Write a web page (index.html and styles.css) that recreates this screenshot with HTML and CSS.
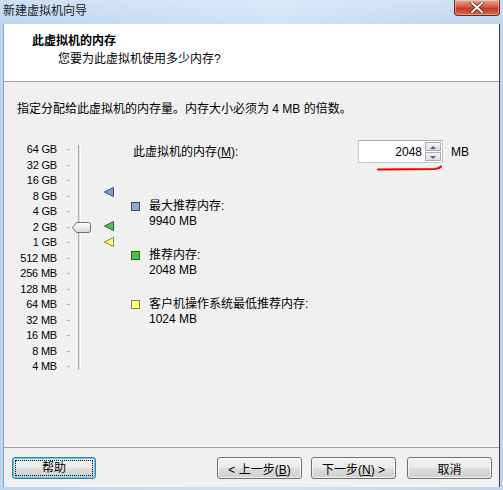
FILE: index.html
```html
<!DOCTYPE html>
<html lang="zh-CN">
<head>
    <meta charset="UTF-8">
    <title>新建虚拟机向导</title>
    <link rel="stylesheet" href="styles.css">
</head>
<body>
    <div class="window">
        <div class="titlebar">
            <span class="title">新建虚拟机向导</span>
            <span class="close">
                <svg width="14" height="11" viewBox="0 0 14 11">
                    <path d="M2 1 L12 10 M12 1 L2 10" stroke="#5a1a10" stroke-width="3.4" stroke-linecap="square"/>
                    <path d="M2 1 L12 10 M12 1 L2 10" stroke="#fff" stroke-width="2" stroke-linecap="square"/>
                </svg>
            </span>
        </div>

        <div class="client">
            <div class="header">
                <h1>此虚拟机的内存</h1>
                <p>您要为此虚拟机使用多少内存?</p>
            </div>

            <p class="intro">指定分配给此虚拟机的内存量。内存大小必须为 4 MB 的倍数。</p>

            <div class="main">
                <div class="scale">
                    <ul class="scale-labels">
                        <li>64 GB</li>
                        <li>32 GB</li>
                        <li>16 GB</li>
                        <li>8 GB</li>
                        <li>4 GB</li>
                        <li>2 GB</li>
                        <li>1 GB</li>
                        <li>512 MB</li>
                        <li>256 MB</li>
                        <li>128 MB</li>
                        <li>64 MB</li>
                        <li>32 MB</li>
                        <li>16 MB</li>
                        <li>8 MB</li>
                        <li>4 MB</li>
                    </ul>
                    <div class="track"></div>

                    <!-- slider thumb -->
                    <svg class="thumb" width="19" height="11" viewBox="0 0 19 11">
                        <defs>
                            <linearGradient id="thumbFill" x1="0" y1="0" x2="0" y2="1">
                                <stop offset="0" stop-color="#ffffff"/>
                                <stop offset="1" stop-color="#d6d6d6"/>
                            </linearGradient>
                        </defs>
                        <path d="M0.5 5.5 L4.5 0.5 L16.5 0.5 Q18.5 0.5 18.5 2.5 L18.5 8.5 Q18.5 10.5 16.5 10.5 L4.5 10.5 Z" fill="url(#thumbFill)" stroke="#6f6f6f"/>
                    </svg>

                    <!-- markers -->
                    <svg class="marker marker-max" width="10" height="10" viewBox="0 0 10 10">
                        <path d="M0.5 5 L9.5 0.5 L9.5 9.5 Z" fill="#7f9fcf" stroke="#2f4f86"/>
                    </svg>
                    <svg class="marker marker-rec" width="10" height="10" viewBox="0 0 10 10">
                        <path d="M0.5 5 L9.5 0.5 L9.5 9.5 Z" fill="#4fc345" stroke="#1d6e1d"/>
                    </svg>
                    <svg class="marker marker-min" width="10" height="10" viewBox="0 0 10 10">
                        <path d="M0.5 5 L9.5 0.5 L9.5 9.5 Z" fill="#ffff7a" stroke="#8d8a2a"/>
                    </svg>
                </div>

                <div class="details">
                    <div class="memory-row">
                        <label for="memory">此虚拟机的内存(<u>M</u>):</label>
                        <div class="spin">
                            <input id="memory" type="text" value="2048">
                            <div class="spin-btns">
                                <span class="spin-up"></span>
                                <span class="spin-down"></span>
                            </div>
                            <svg class="mark" width="66" height="6" viewBox="0 0 66 6">
                                <path d="M1 4.5 L58 4 Q62 3.8 64 1.5" stroke="#f00000" stroke-width="2.2" fill="none" stroke-linecap="round"/>
                            </svg>
                        </div>
                        <span class="unit">MB</span>
                    </div>

                    <ul class="legend">
                        <li>
                            <span class="swatch swatch-max"></span>
                            <div>最大推荐内存:<br>9940 MB</div>
                        </li>
                        <li>
                            <span class="swatch swatch-rec"></span>
                            <div>推荐内存:<br>2048 MB</div>
                        </li>
                        <li>
                            <span class="swatch swatch-min"></span>
                            <div>客户机操作系统最低推荐内存:<br>1024 MB</div>
                        </li>
                    </ul>
                </div>
            </div>

            <div class="footer">
                <button class="btn btn-focus"><span>帮助</span></button>
                <div class="nav">
                    <button class="btn">&lt; 上一步(<u>B</u>)</button>
                    <button class="btn">下一步(<u>N</u>) &gt;</button>
                    <button class="btn btn-cancel">取消</button>
                </div>
            </div>
        </div>
    </div>
</body>
</html>
```

FILE: styles.css
```css
* {
    margin: 0;
    padding: 0;
    box-sizing: border-box;
}

body {
    font-family: "Liberation Sans", "Noto Sans CJK SC", sans-serif;
    font-size: 12px;
    color: #000;
    background: #fff;
}

ul {
    list-style: none;
}

.window {
    width: 503px;
    height: 490px;
    display: flex;
    flex-direction: column;
    background: linear-gradient(to right, #bcd6f1 0%, #cfe3f8 55%, #bdd5ee 100%);
    padding: 0 3px 3px 3px;
}

/* title bar */
.titlebar {
    height: 24px;
    display: flex;
    align-items: flex-start;
    justify-content: space-between;
    background: linear-gradient(to bottom, rgba(255,255,255,0.25), rgba(255,255,255,0));
    margin: 0 -3px;
    padding: 0 3px 0 3px;
}

.title {
    line-height: 22px;
    font-size: 12px;
    color: #1a1a1a;
}

.close {
    width: 46px;
    height: 16px;
    display: flex;
    align-items: center;
    justify-content: center;
    background: linear-gradient(to bottom, #e7a89a 0%, #d25a44 45%, #c13b22 55%, #d7694b 100%);
    border: 1px solid #6b2a1e;
    border-top: none;
    border-radius: 0 0 4px 4px;
    box-shadow: inset 0 0 0 1px rgba(255,255,255,0.35);
}

/* client area */
.client {
    flex: 1;
    display: flex;
    flex-direction: column;
    background: #f0f0f0;
    border-right: 1px solid #3c3c3c;
    border-left: 1px solid #8ea4bd;
}

.header {
    height: 58px;
    background: #fff;
    border-bottom: 1px solid #a0a0a0;
    padding: 9px 0 0 28px;
}

.header h1 {
    font-size: 12px;
    font-weight: bold;
    line-height: 16px;
}

.header p {
    margin-top: 2px;
    padding-left: 26px;
    line-height: 16px;
}

.intro {
    margin-top: 19px;
    padding-left: 13px;
    line-height: 16px;
}

.main {
    margin-top: 23px;
    display: flex;
}

/* memory slider */
.scale {
    position: relative;
    width: 127px;
    height: 232px;
}

.scale-labels {
    padding-top: 2px;
    font-size: 11px;
}

.scale-labels li {
    height: 15.5px;
    line-height: 15.5px;
    display: grid;
    grid-template-columns: 53px 3px;
    column-gap: 10px;
    align-items: center;
    text-align: right;
    letter-spacing: -0.2px;
}

.scale-labels li::after {
    content: "";
    height: 1px;
    background: #b4b4b4;
}

.track {
    position: absolute;
    left: 74px;
    top: 5px;
    width: 3px;
    height: 225px;
    background: #e4e4e4;
    border-left: 1px solid #a8a8a8;
    border-right: 1px solid #fff;
}

.thumb {
    position: absolute;
    left: 68px;
    top: 82px;
}

.marker {
    position: absolute;
    left: 100px;
}

.marker-max {
    top: 47px;
}

.marker-rec {
    top: 81px;
}

.marker-min {
    top: 97px;
}

/* details */
.details {
    flex: 1;
}

.memory-row {
    display: flex;
    align-items: center;
    height: 23px;
}

.memory-row label {
    width: 227px;
    padding-left: 2px;
    line-height: 16px;
}

.spin {
    position: relative;
    display: flex;
    width: 85px;
    height: 23px;
    background: #fff;
    border: 1px solid #c4c6cc;
    border-top-color: #abadb3;
    padding: 1px;
}

.spin input {
    flex: 1;
    min-width: 0;
    border: none;
    outline: none;
    background: transparent;
    font-family: "Liberation Sans", sans-serif;
    font-size: 12px;
    text-align: right;
    padding-right: 3px;
}

.spin-btns {
    width: 16px;
    display: flex;
    flex-direction: column;
    gap: 1px;
}

.spin-btns span {
    flex: 1;
    position: relative;
    border: 1px solid #a9abb0;
    background: linear-gradient(to bottom, #f4f4f4, #dedede);
}

.spin-btns span::after {
    content: "";
    position: absolute;
    left: 4px;
    top: 3px;
    border-left: 3px solid transparent;
    border-right: 3px solid transparent;
}

.spin-up::after {
    border-bottom: 3px solid #4c5f87;
}

.spin-down::after {
    border-top: 3px solid #4c5f87;
}

.mark {
    position: absolute;
    left: 18px;
    top: 24px;
}

.unit {
    margin-left: 8px;
    font-size: 12px;
}

.legend {
    margin-top: 36px;
    display: flex;
    flex-direction: column;
    gap: 19px;
}

.legend li {
    display: flex;
    align-items: flex-start;
    gap: 9px;
    line-height: 15px;
}

.swatch {
    width: 9px;
    height: 9px;
    margin-top: 3px;
    border: 1px solid;
}

.swatch-max {
    background: #8eaad4;
    border-color: #2e4a7e;
}

.swatch-rec {
    background: #4cc040;
    border-color: #1c6c1c;
}

.swatch-min {
    background: #ffff80;
    border-color: #8a8729;
}

/* footer */
.footer {
    margin-top: auto;
    border-top: 1px solid #a0a0a0;
    display: flex;
    justify-content: space-between;
    padding: 9px 7px 8px 8px;
}

.nav {
    display: flex;
    gap: 9px;
}

.btn {
    width: 85px;
    height: 22px;
    font-family: "Liberation Sans", "Noto Sans CJK SC", sans-serif;
    font-size: 12px;
    color: #000;
    border: 1px solid #707070;
    border-radius: 3px;
    background: linear-gradient(to bottom, #f2f2f2 0%, #ebebeb 48%, #dddddd 52%, #cfcfcf 100%);
    box-shadow: inset 0 0 0 1px rgba(255,255,255,0.7);
}

.btn-cancel {
    margin-left: 2px;
}

.btn-focus {
    width: 84px;
    border-color: #3c7fb1;
    box-shadow: inset 0 0 0 1px #48d0f8;
    padding: 2px;
}

.btn-focus span {
    display: block;
    height: 100%;
    line-height: 15px;
    border: 1px dotted #000;
}
```
